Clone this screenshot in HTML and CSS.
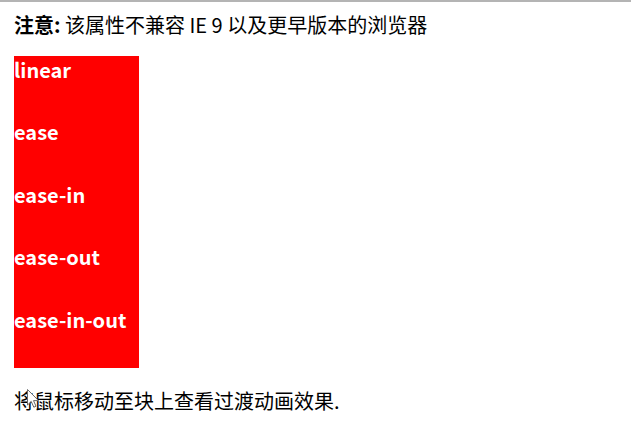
FILE: index.html
```html
<!DOCTYPE html>
<html lang="zh">
<head>
<meta charset="utf-8">
<title>transition-timing-function</title>
<link rel="stylesheet" href="styles.css">
</head>
<body>
<div class="page">
  <p class="note"><b>注意:</b> 该属性不兼容 IE 9 以及更早版本的浏览器</p>
  <div class="boxes">
    <div class="box">linear</div>
    <div class="box">ease</div>
    <div class="box">ease-in</div>
    <div class="box">ease-out</div>
    <div class="box">ease-in-out</div>
  </div>
  <p class="hint">将鼠标移动至块上查看过渡动画效果.</p>
</div>
<svg class="cursor" width="13" height="19" viewBox="0 0 13 19" aria-hidden="true">
  <path d="M0.5 0.5 L0.5 16 L4.2 12.4 L6.8 18.2 L9 17.2 L6.5 11.6 L11.5 11.6 Z" fill="#fff" stroke="#666" stroke-width="1"/>
</svg>
</body>
</html>
```
FILE: styles.css
```css
html, body {
  margin: 0;
  padding: 0;
  background: #fff;
}
body {
  border-top: 2px solid #b4b4b4;
  font-family: "Noto Sans CJK SC", "Noto Sans", sans-serif;
  font-size: 20px;
  color: #000;
  position: relative;
  min-height: 425px;
}
.page {
  padding: 0 14px;
}
.note {
  margin: 0;
  padding-top: 9px;
  line-height: 28px;
  height: 45px;
}
.note b {
  font-weight: bold;
}
.boxes {
  display: flex;
  flex-direction: column;
  width: 125px;
}
.box {
  height: 62.4px;
  background: #ff0000;
  color: #fff;
  font-weight: bold;
  line-height: 28px;
}
.hint {
  margin: 0;
  padding-top: 19px;
  line-height: 28px;
}
.cursor {
  position: absolute;
  left: 27px;
  top: 387px;
}
```
